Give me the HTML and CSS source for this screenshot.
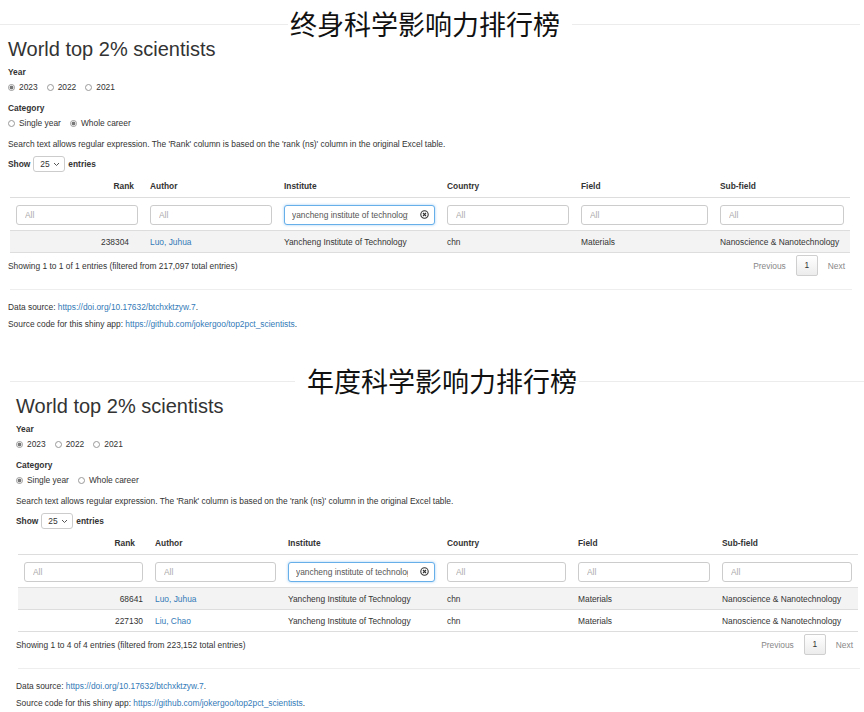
FILE: index.html
```html
<!DOCTYPE html>
<html lang="en">
<head>
  <meta charset="UTF-8">
  <meta name="viewport" content="width=device-width, initial-scale=1.0">
  <title>World top 2% scientists</title>
  <link rel="stylesheet" href="styles.css">
</head>
<body>
  <!-- whole career ranking -->
  <div class="shot shot-career">
    <div class="banner"><span class="banner-title">终身科学影响力排行榜</span></div>
    <div class="content">
      <h2 class="app-title">World top 2% scientists</h2>
      <div class="field-label">Year</div>
      <div class="radios">
        <label class="radio"><span class="radio-dot checked"></span>2023</label>
        <label class="radio"><span class="radio-dot"></span>2022</label>
        <label class="radio"><span class="radio-dot"></span>2021</label>
      </div>
      <div class="field-label gap">Category</div>
      <div class="radios">
        <label class="radio"><span class="radio-dot"></span>Single year</label>
        <label class="radio"><span class="radio-dot checked"></span>Whole career</label>
      </div>
      <p class="note">Search text allows regular expression. The 'Rank' column is based on the 'rank (ns)' column in the original Excel table.</p>
      <div class="show-row">
        Show
        <span class="select">25
          <svg class="chev" width="7" height="5" viewBox="0 0 7 5"><polyline points="1,1 3.5,3.5 6,1" fill="none" stroke="#555" stroke-width="1"/></svg>
        </span>
        entries
      </div>

      <table class="dt dt-career">
        <colgroup>
          <col class="c1"><col class="c2"><col class="c3"><col class="c4"><col class="c5"><col class="c6">
        </colgroup>
        <thead>
          <tr>
            <th class="rank">Rank</th>
            <th>Author</th>
            <th>Institute</th>
            <th>Country</th>
            <th>Field</th>
            <th>Sub-field</th>
          </tr>
          <tr class="filters">
            <td><input type="text" placeholder="All"></td>
            <td><input type="text" placeholder="All"></td>
            <td>
              <div class="search-box">
                <input class="focused" type="text" value="yancheng institute of technology">
                <svg class="clear" width="9" height="9" viewBox="0 0 9 9"><circle cx="4.5" cy="4.5" r="3.7" fill="none" stroke="#333" stroke-width="1.1"/><path d="M3 3 L6 6 M6 3 L3 6" stroke="#333" stroke-width="1.1"/></svg>
              </div>
            </td>
            <td><input type="text" placeholder="All"></td>
            <td><input type="text" placeholder="All"></td>
            <td><input type="text" placeholder="All"></td>
          </tr>
        </thead>
        <tbody>
          <tr class="odd">
            <td class="rank">238304</td>
            <td><a href="#">Luo, Juhua</a></td>
            <td>Yancheng Institute of Technology</td>
            <td>chn</td>
            <td>Materials</td>
            <td>Nanoscience &amp; Nanotechnology</td>
          </tr>
        </tbody>
      </table>

      <div class="dt-foot">
        <span>Showing 1 to 1 of 1 entries (filtered from 217,097 total entries)</span>
        <div class="pager">
          <span class="pager-link">Previous</span>
          <span class="pager-current">1</span>
          <span class="pager-link">Next</span>
        </div>
      </div>
      <hr class="sep">
      <p class="src">Data source: <a href="#">https://doi.org/10.17632/btchxktzyw.7</a>.</p>
      <p class="src second">Source code for this shiny app: <a href="#">https://github.com/jokergoo/top2pct_scientists</a>.</p>
    </div>
  </div>

  <!-- single year ranking -->
  <div class="shot shot-year">
    <div class="banner"><span class="banner-title">年度科学影响力排行榜</span></div>
    <div class="content">
      <h2 class="app-title">World top 2% scientists</h2>
      <div class="field-label">Year</div>
      <div class="radios">
        <label class="radio"><span class="radio-dot checked"></span>2023</label>
        <label class="radio"><span class="radio-dot"></span>2022</label>
        <label class="radio"><span class="radio-dot"></span>2021</label>
      </div>
      <div class="field-label gap">Category</div>
      <div class="radios">
        <label class="radio"><span class="radio-dot checked"></span>Single year</label>
        <label class="radio"><span class="radio-dot"></span>Whole career</label>
      </div>
      <p class="note">Search text allows regular expression. The 'Rank' column is based on the 'rank (ns)' column in the original Excel table.</p>
      <div class="show-row">
        Show
        <span class="select">25
          <svg class="chev" width="7" height="5" viewBox="0 0 7 5"><polyline points="1,1 3.5,3.5 6,1" fill="none" stroke="#555" stroke-width="1"/></svg>
        </span>
        entries
      </div>

      <table class="dt dt-year">
        <colgroup>
          <col class="c1"><col class="c2"><col class="c3"><col class="c4"><col class="c5"><col class="c6">
        </colgroup>
        <thead>
          <tr>
            <th class="rank">Rank</th>
            <th>Author</th>
            <th>Institute</th>
            <th>Country</th>
            <th>Field</th>
            <th>Sub-field</th>
          </tr>
          <tr class="filters">
            <td><input type="text" placeholder="All"></td>
            <td><input type="text" placeholder="All"></td>
            <td>
              <div class="search-box">
                <input class="focused" type="text" value="yancheng institute of technology">
                <svg class="clear" width="9" height="9" viewBox="0 0 9 9"><circle cx="4.5" cy="4.5" r="3.7" fill="none" stroke="#333" stroke-width="1.1"/><path d="M3 3 L6 6 M6 3 L3 6" stroke="#333" stroke-width="1.1"/></svg>
              </div>
            </td>
            <td><input type="text" placeholder="All"></td>
            <td><input type="text" placeholder="All"></td>
            <td><input type="text" placeholder="All"></td>
          </tr>
        </thead>
        <tbody>
          <tr class="odd">
            <td class="rank">68641</td>
            <td><a href="#">Luo, Juhua</a></td>
            <td>Yancheng Institute of Technology</td>
            <td>chn</td>
            <td>Materials</td>
            <td>Nanoscience &amp; Nanotechnology</td>
          </tr>
          <tr>
            <td class="rank">227130</td>
            <td><a href="#">Liu, Chao</a></td>
            <td>Yancheng Institute of Technology</td>
            <td>chn</td>
            <td>Materials</td>
            <td>Nanoscience &amp; Nanotechnology</td>
          </tr>
        </tbody>
      </table>

      <div class="dt-foot">
        <span>Showing 1 to 4 of 4 entries (filtered from 223,152 total entries)</span>
        <div class="pager">
          <span class="pager-link">Previous</span>
          <span class="pager-current">1</span>
          <span class="pager-link">Next</span>
        </div>
      </div>
      <hr class="sep">
      <p class="src">Data source: <a href="#">https://doi.org/10.17632/btchxktzyw.7</a>.</p>
      <p class="src second">Source code for this shiny app: <a href="#">https://github.com/jokergoo/top2pct_scientists</a>.</p>
    </div>
  </div>
</body>
</html>
```

FILE: styles.css
```css
body {
  margin: 0;
  background: #fff;
  color: #333;
  font-family: "Liberation Sans", Arial, sans-serif;
  font-size: 8.4px;
  line-height: 12px;
}

a {
  color: #337ab7;
  text-decoration: none;
}

.shot {
  width: 860px;
}

.shot-year {
  width: 854px;
  margin-left: 10px;
  margin-top: 27px;
}

/* chinese caption sitting on the thin top rule */
.banner {
  display: flex;
  align-items: center;
  height: 28px;
  padding-top: 10px;
}

.banner::before,
.banner::after {
  content: "";
  flex: 1;
  height: 1px;
  background: #ececec;
}

.banner-title {
  padding: 0 2px;
  color: #111;
  font-family: "Noto Sans CJK SC", sans-serif;
  font-size: 27px;
  line-height: 28px;
  font-weight: 400;
}

.shot-career .banner-title {
  padding-right: 12px;
}

.shot-year .banner-title {
  padding-left: 12px;
}

.content {
  padding-left: 8px;
}

.shot-year .content {
  padding-left: 6px;
}

.app-title {
  margin: 0;
  font-size: 20px;
  line-height: 22px;
  font-weight: 400;
}

.field-label {
  margin-top: 6px;
  font-weight: 700;
}

.field-label.gap {
  margin-top: 9px;
}

.radios {
  display: flex;
  gap: 9px;
  margin-top: 3px;
}

.radio {
  display: flex;
  align-items: center;
  gap: 4px;
}

.radio-dot {
  width: 7px;
  height: 7px;
  box-sizing: border-box;
  border: 1px solid #999;
  border-radius: 50%;
  background: #fff;
}

.radio-dot.checked {
  background: radial-gradient(circle, #777 0 1.6px, #fff 2.2px);
}

.note {
  margin: 9px 0 0;
}

.show-row {
  display: flex;
  align-items: center;
  gap: 3px;
  height: 16px;
  margin-top: 6px;
  font-weight: 700;
}

.select {
  display: flex;
  align-items: center;
  justify-content: space-between;
  width: 32px;
  height: 16px;
  box-sizing: border-box;
  padding: 0 4px 0 6px;
  border: 1px solid #ccc;
  border-radius: 3px;
  font-weight: 400;
}

/* datatable */
.dt {
  width: 840px;
  margin: 4px 0 0 2px;
  border-collapse: collapse;
  table-layout: fixed;
}

.dt-career .c1 { width: 134px; }
.dt-career .c2 { width: 134px; }
.dt-career .c3 { width: 163px; }
.dt-career .c4 { width: 134px; }
.dt-career .c5 { width: 139px; }
.dt-career .c6 { width: 136px; }

.dt-year .c1 { width: 131px; }
.dt-year .c2 { width: 133px; }
.dt-year .c3 { width: 159px; }
.dt-year .c4 { width: 131px; }
.dt-year .c5 { width: 144px; }
.dt-year .c6 { width: 142px; }

.dt th {
  padding: 4px 6px 5px;
  border-bottom: 1px solid #ddd;
  text-align: left;
  font-weight: 700;
}

.dt td {
  padding: 5px 6px 4px;
  border-bottom: 1px solid #ddd;
  white-space: nowrap;
  overflow: hidden;
}

.dt .rank {
  text-align: right;
}

.dt-career th.rank { padding-right: 10px; }
.dt-career td.rank { padding-right: 15px; }
.dt-year th.rank { padding-right: 14px; }
.dt-year td.rank { padding-right: 6px; }

.dt .filters td {
  padding: 7px 6px 5px;
}

.dt input {
  display: block;
  width: 100%;
  height: 20px;
  box-sizing: border-box;
  margin: 0;
  padding: 0 8px;
  border: 1px solid #ccc;
  border-radius: 3px;
  color: #555;
  font-family: inherit;
  font-size: 8.4px;
}

.dt input::placeholder {
  color: #aaa;
}

.search-box {
  position: relative;
}

.dt input.focused {
  padding: 0 26px 0 7px;
  border-color: #66afe9;
  box-shadow: 0 0 3px rgba(102, 175, 233, 0.6);
  outline: none;
}

.clear {
  position: absolute;
  right: 6px;
  top: 5px;
}

.dt tr.odd td {
  background: #f3f3f3;
}

.dt-foot {
  display: flex;
  justify-content: space-between;
  align-items: center;
  width: 842px;
  height: 21px;
  box-sizing: border-box;
  margin-top: 2px;
  padding-right: 5px;
}

.pager {
  display: flex;
  align-items: center;
  gap: 10px;
}

.pager-link {
  color: #888;
}

.pager-current {
  width: 22px;
  height: 21px;
  box-sizing: border-box;
  border: 1px solid #cfcfcf;
  border-radius: 2px;
  background: linear-gradient(#fff, #ececec);
  text-align: center;
  line-height: 19px;
}

.sep {
  width: 842px;
  height: 1px;
  margin: 13px 0 0 2px;
  border: 0;
  background: #eee;
}

.src {
  margin: 11px 0 0;
}

.src.second {
  margin-top: 5px;
}
```
